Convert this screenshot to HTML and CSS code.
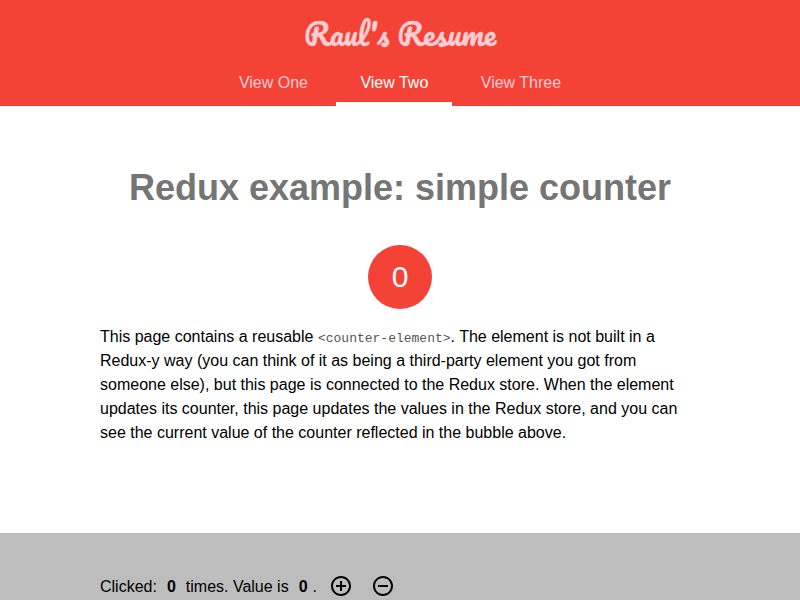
FILE: index.html
```html
<!DOCTYPE html>
<html lang="en">
<head>
<meta charset="utf-8">
<title>Raul's Resume</title>
<link rel="stylesheet" href="styles.css">
</head>
<body>
<header class="header">
  <div class="title">Raul's Resume</div>
  <nav class="tabs"><a>View One</a><a class="selected">View Two</a><a>View Three</a></nav>
</header>
<main>
  <section class="intro">
    <h2>Redux example: simple counter</h2>
    <div class="circle">0</div>
    <p>This page contains a reusable <code>&lt;counter-element&gt;</code>. The element is not built in a<br>Redux-y way (you can think of it as being a third-party element you got from<br>someone else), but this page is connected to the Redux store. When the element<br>updates its counter, this page updates the values in the Redux store, and you can<br>see the current value of the counter reflected in the bubble above.</p>
  </section>
  <section class="counter">
    <div class="row"><span>Clicked:</span><b>0</b><span>times. Value is</span><b>0</b><span class="dot">.</span><button class="plus" aria-label="Plus"><svg viewBox="0 0 24 24"><path d="M13 7h-2v4H7v2h4v4h2v-4h4v-2h-4V7zm-1-5C6.48 2 2 6.48 2 12s4.48 10 10 10 10-4.48 10-10S17.52 2 12 2zm0 18c-4.41 0-8-3.59-8-8s3.59-8 8-8 8 3.59 8 8-3.59 8-8 8z"/></svg></button><button aria-label="Minus"><svg viewBox="0 0 24 24"><path d="M7 11v2h10v-2H7zm5-9C6.48 2 2 6.48 2 12s4.48 10 10 10 10-4.48 10-10S17.52 2 12 2zm0 18c-4.41 0-8-3.59-8-8s3.59-8 8-8 8 3.59 8 8-3.59 8-8 8z"/></svg></button></div>
  </section>
</main>
</body>
</html>
```
FILE: styles.css
```css
* { box-sizing: border-box; }
body { margin: 0; font: 16px/24px "Liberation Sans", Arial, sans-serif; color: #000; }
.header { height: 106px; background: #f44336; text-align: center; }
.title { height: 68px; font: 400 30px/68px "Pacifico", "Lobster", cursive; color: #ffcdd2; -webkit-text-stroke: 0.3px #ffcdd2; white-space: nowrap; }
.tabs { height: 38px; display: flex; justify-content: center; gap: 4.45px; }
.tabs a { padding: 3px 24px 0; color: #ffcdd2; line-height: 24px; }
.tabs .selected { color: #fff; border-bottom: 4px solid #fff; }
.intro { height: 427px; padding: 60px 100px 0; }
h2 { margin: 0; font-size: 36px; line-height: 44px; text-align: center; color: #757575; white-space: nowrap; }
.circle { width: 64px; height: 64px; margin: 35px auto 16px; border-radius: 50%; background: #f44336; color: #fff; font-size: 30px; line-height: 64px; text-align: center; }
p { margin: 0; white-space: nowrap; }
code { font: 13px "Liberation Mono", monospace; color: #555; }
.counter { height: 67px; padding: 41px 100px 0; background: #bdbdbd; }
.row { display: flex; height: 24px; line-height: 26px; white-space: nowrap; }
.row b { margin: 0 10px; }
.row .dot { margin-left: -5px; }
button { border: 0; padding: 0; background: none; width: 24px; height: 24px; }
.plus { margin: 0 18px 0 12px; }
button svg { display: block; width: 24px; height: 24px; }
```
